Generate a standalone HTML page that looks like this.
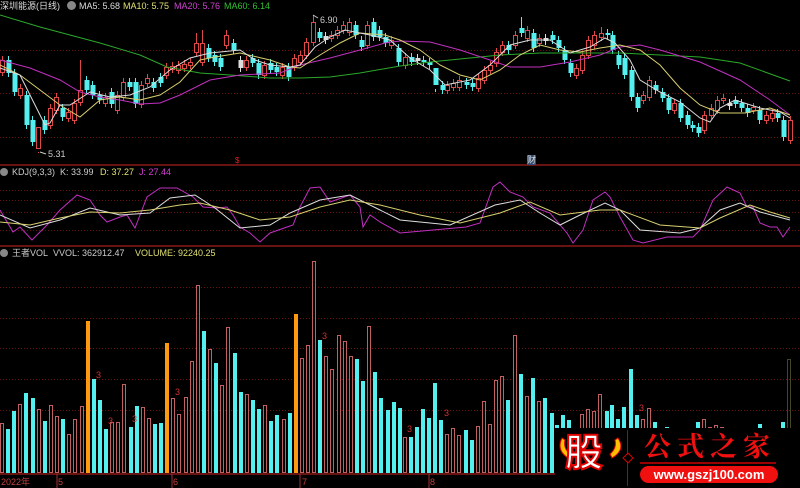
<!DOCTYPE html>
<html><head><meta charset="utf-8"><style>
html,body{margin:0;padding:0;background:#000;width:800px;height:488px;overflow:hidden;font-family:"Liberation Sans","Noto Sans CJK SC",sans-serif}
.t{position:absolute;font-size:9px;white-space:nowrap;line-height:10px}
</style></head><body>
<svg id="s" width="800" height="488" style="position:absolute;left:0;top:0">
<g stroke="#6a1010" stroke-dasharray="1,2" stroke-width="1">
<line x1="0" y1="50.5" x2="800" y2="50.5"/><line x1="0" y1="93.5" x2="800" y2="93.5"/><line x1="0" y1="137.5" x2="800" y2="137.5"/>
<line x1="0" y1="190.5" x2="800" y2="190.5"/><line x1="0" y1="200.5" x2="800" y2="200.5"/><line x1="0" y1="212.5" x2="800" y2="212.5"/><line x1="0" y1="230.5" x2="800" y2="230.5"/>
<line x1="0" y1="287.5" x2="800" y2="287.5"/><line x1="0" y1="318.5" x2="800" y2="318.5"/><line x1="0" y1="348.5" x2="800" y2="348.5"/><line x1="0" y1="379.5" x2="800" y2="379.5"/><line x1="0" y1="410.5" x2="800" y2="410.5"/>
</g>
<g stroke="#8a1818" stroke-width="1.5"><line x1="0" y1="165" x2="800" y2="165"/><line x1="0" y1="246" x2="800" y2="246"/><line x1="0" y1="474" x2="800" y2="474"/></g>
<g id="cd"></g><g id="ln" fill="none" stroke-width="1"></g><g id="vb"></g>
</svg>
<div class="t" style="left:0;top:1px;color:#ddd">深圳能源(日线)</div>
<div class="t" style="left:67px;top:1px;width:9px;height:9px;border-radius:50%;background:#888"></div>
<div class="t" style="left:79px;top:1px;color:#ddd">MA5: 5.68</div>
<div class="t" style="left:123px;top:1px;color:#e0e070">MA10: 5.75</div>
<div class="t" style="left:174px;top:1px;color:#d040d0">MA20: 5.76</div>
<div class="t" style="left:224px;top:1px;color:#30c030">MA60: 6.14</div>
<div class="t" style="left:320px;top:15px;color:#ccc">6.90</div>
<div class="t" style="left:48px;top:149px;color:#ccc">5.31</div>
<div class="t" style="left:235px;top:156px;color:#e02020;font-size:8px">$</div>
<div class="t" style="left:527px;top:155px;color:#ddd;background:#334a70;font-size:9px">财</div>
<div class="t" style="left:0;top:168px;width:8px;height:8px;border-radius:50%;background:#888"></div>
<div class="t" style="left:12px;top:167px;color:#ccc">KDJ(9,3,3)&nbsp; K: 33.99</div>
<div class="t" style="left:100px;top:167px;color:#e0e070">D: 37.27</div>
<div class="t" style="left:139px;top:167px;color:#d040d0">J: 27.44</div>
<div class="t" style="left:0;top:249px;width:8px;height:8px;border-radius:50%;background:#888"></div>
<div class="t" style="left:12px;top:248px;color:#ccc">王者VOL&nbsp; VVOL: 362912.47</div>
<div class="t" style="left:135px;top:248px;color:#e0e070">VOLUME: 92240.25</div>
<div class="t" style="left:1px;top:477px;color:#c04040">2022年</div>
<div class="t" style="left:58px;top:477px;color:#c04040">5</div>
<div class="t" style="left:173px;top:477px;color:#c04040">6</div>
<div class="t" style="left:302px;top:477px;color:#c04040">7</div>
<div class="t" style="left:430px;top:477px;color:#c04040">8</div>
<div style="position:absolute;left:555px;top:428px;width:245px;height:60px;background:#000"></div>
<svg width="70" height="30" style="position:absolute;left:556px;top:436px"><path d="M6 2 Q0 14 12 22 L14 18 Q7 12 9 4 Z" fill="#ffc000" stroke="#e00000" stroke-width="1"/><path d="M62 2 Q70 14 56 22 L54 18 Q61 12 59 4 Z" fill="#ffc000" stroke="#e00000" stroke-width="1"/></svg>
<div class="t" style="left:565px;top:428px;font-size:38px;line-height:44px;font-weight:bold;color:#fff;-webkit-text-stroke:2px #e00000;font-family:'Noto Sans CJK SC',sans-serif">股</div>
<div style="position:absolute;left:627px;top:430px;width:1px;height:56px;background:#b00"></div>
<div style="position:absolute;left:624px;top:454px;width:6px;height:6px;border:1px solid #d00;transform:rotate(45deg);background:#000"></div>
<div class="t" style="left:644px;top:429px;font-size:27px;line-height:32px;font-weight:bold;color:#f01010;letter-spacing:6px;font-family:'Noto Serif CJK SC',serif">公式之家</div>
<div style="position:absolute;left:640px;top:462px;width:136px;height:2px;background:#900"></div>
<div style="position:absolute;left:640px;top:466px;width:138px;height:17px;border-radius:9px;background:#f01010;color:#fff;font-size:13px;font-weight:bold;text-align:center;line-height:17px">www.gszj100.com</div>
<script>
var NS="http://www.w3.org/2000/svg";
function el(p,n,a){var e=document.createElementNS(NS,n);for(var k in a)e.setAttribute(k,a[k]);document.getElementById(p).appendChild(e);return e}
var cols=["#e04848","#54f0f0","#ddd"];
var C=[[2,60,72,0],[8,60,73,1],[14,73,92,1],[20,88,95,0],[26,95,125,1],[32,120,142,1],[38,127,148,0,153],[44,120,130,1],[50,108,125,0],[56,97,110,0],[62,108,117,1],[68,112,118,0],[74,103,120,0],[80,90,102,0,60],[86,80,90,1],[92,85,95,1],[99,95,100,1],[105,97,103,0],[111,92,104,1],[117,95,110,0],[123,82,97,0],[129,82,87,1],[135,82,104,1],[141,85,104,0],[147,78,83,0],[153,82,88,1],[160,77,83,1],[166,67,75,0],[172,66,69,0],[178,65,70,0],[184,64,68,0],[190,62,65,0],[196,43,52,0,33],[202,43,62,0,30],[208,48,58,1],[214,55,62,1],[220,58,67,1],[226,35,45,0,30],[233,43,50,1],[240,60,68,2],[246,60,67,0],[252,58,63,1],[258,63,75,1],[264,65,75,0],[270,63,70,1],[276,67,72,1],[282,67,75,0],[288,67,77,1],[294,58,67,0],[300,55,62,0],[306,42,55,0],[313,22,42,0,15],[319,32,38,1],[325,36,40,2],[331,35,38,0],[337,30,35,0],[343,25,30,0],[349,22,32,0],[355,25,35,1],[361,40,47,1],[367,25,45,0],[373,22,37,1],[379,30,37,1],[385,37,43,1],[391,40,45,0],[398,48,62,1],
[405,57,65,0],[411,57,62,1],[417,58,61,2],[423,60,62,1],[429,62,65,1],[435,68,85,1,92],[442,85,90,1],[447,85,90,0],[453,83,87,0],[459,80,87,0],[466,82,85,1],[472,83,87,1],[478,78,88,0],[484,70,80,0],[490,65,70,0],[496,52,63,0],[502,45,52,0],[508,45,50,1],[515,35,45,0],[521,28,33,1,17],[527,30,38,0],[533,33,48,1],[539,38,43,0],[545,38,41,2],[552,35,40,1],[558,40,48,1],[564,50,60,1],[570,63,73,1],[576,68,75,0],[582,55,70,0],[588,40,55,0],[594,35,45,0],[601,33,37,0,27],[607,33,35,1],[612,35,50,1],[618,55,65,1],[624,58,75,1],[631,70,97,1],[637,97,108,1],[643,95,100,0],[649,80,97,0],[655,85,90,1],[662,92,98,1],[668,98,110,1],[674,103,110,0],[680,103,118,1],[687,115,125,1],[692,125,128,1],[698,127,133,1],[704,115,130,0],[711,108,115,0],[717,100,110,0],[723,98,100,0],[729,103,106,2],[735,100,104,1],[741,103,108,1],[747,108,113,1],[753,107,110,0],[759,110,120,1],[766,115,120,0],[772,113,118,0],[777,113,118,1],[783,120,137,1],[790,120,140,0]];
C.forEach(function(c){var col=cols[c[3]];var hi=c[4]||c[1]-4;var lo=c[2]+4;
el("cd","line",{x1:c[0]+.5,x2:c[0]+.5,y1:hi,y2:lo,stroke:col});
if(c[3]==0)el("cd","rect",{x:c[0]-1.5,y:c[1]+.5,width:4,height:c[2]-c[1],fill:"#000",stroke:col});
else el("cd","rect",{x:c[0]-1.5,y:c[1],width:5,height:Math.max(1,c[2]-c[1]),fill:col});});
function pl(pts,col){el("ln","polyline",{points:pts,stroke:col});}
pl("0,15 40,27 100,43 140,55 167,67 200,73 230,75 270,78 300,78 330,77 360,73 400,66 430,62 470,58 500,55 540,53 580,53 620,53 660,55 700,57 740,63 790,81","#2aa82a");
pl("0,60 30,68 60,80 80,92 100,97 120,100 140,104 160,103 180,95 210,80 240,75 280,73 300,65 330,58 360,50 385,43 400,41 430,42 460,50 490,60 510,67 540,67 570,62 600,55 620,47 640,45 660,50 700,62 740,80 770,100 790,115","#c030c0");
pl("0,65 20,75 40,90 60,105 80,117 100,100 120,97 140,100 160,95 180,82 200,60 215,57 240,53 270,60 290,67 300,68 320,55 340,43 360,33 385,35 400,40 420,50 440,65 460,75 480,80 500,70 520,55 540,45 560,50 580,52 600,48 620,45 640,50 660,65 680,88 700,105 720,113 745,113 770,108 790,115","#d8d070");
pl("0,68 20,75 35,105 45,125 50,123 60,105 70,105 90,92 110,97 130,95 150,87 170,70 190,58 210,53 240,50 255,60 270,65 290,67 300,65 315,47 330,37 345,30 370,35 390,40 410,58 430,70 445,85 470,80 490,65 510,45 530,40 550,40 570,53 590,47 605,38 615,43 630,60 640,80 660,92 680,102 700,118 710,122 720,108 735,100 760,108 780,112 790,118","#ddd");
pl("40,152 46,154","#ccc");pl("313,15 318,18","#ccc");
pl("0,210 13,232 20,227 32,240 47,225 60,210 77,195 90,200 100,215 107,222 120,217 127,215 135,228 147,197 160,188 177,188 193,197 203,207 217,208 227,207 233,215 240,227 250,233 260,242 270,233 287,227 293,225 300,207 310,188 320,187 330,202 350,195 360,207 363,227 370,215 380,222 400,233 466,227 480,223 493,187 500,182 510,192 523,197 533,207 550,213 567,233 573,243 583,230 593,200 605,192 610,197 620,217 633,240 643,243 667,237 693,237 700,230 713,200 727,187 740,193 747,207 753,207 760,223 770,227 777,227 783,237 790,227","#c030c0");
pl("0,215 30,228 60,220 90,208 120,215 150,213 170,198 195,195 215,208 240,228 270,225 290,213 320,200 350,195 380,210 400,220 450,225 495,205 520,200 540,213 560,225 580,215 605,203 620,210 640,230 680,233 700,228 720,210 740,203 760,212 790,220","#ddd");
pl("0,222 30,225 60,218 90,212 120,213 150,210 180,205 200,203 230,210 260,220 290,217 320,207 350,200 380,205 420,215 460,223 500,213 530,202 560,215 600,210 620,210 660,225 700,228 720,218 750,205 770,212 790,218","#d8d070");
var V=[[423,0],[429,1],[411,1],[404,0],[393,1],[398,1],[409,0],[421,1],[405,0],[416,0],[419,1],[434,0],[419,0],[406,0],[321,2],[379,1],[400,1],[429,1],[422,0],[422,0],[384,0],[427,1],[406,1],[407,0],[418,0],[424,1],[423,1],[343,2],[398,0],[414,0],[397,0],[361,0],[285,0],[331,1],[349,0],[363,1],[385,0],[327,0],[353,1],[392,1],[394,0],[400,1],[409,1],[405,0],[421,1],[415,1],[419,0],[413,1],[314,2],[358,0],[345,0],[261,0],[340,1],[356,0],[369,0],[335,0],[341,0],[356,0],[359,1],[381,1],[326,0],[372,1],[398,1],[410,1],[402,1],[408,1]];
var V2=[[405,437,0],[411,437,1],[417,427,1],[423,409,1],[429,418,1],[435,383,1],[441,420,1],[447,434,0],[453,428,0],[459,435,0],[466,430,1],[472,440,1],[478,426,0],[484,401,0],[490,424,0],[496,380,0],[502,376,0],[508,400,1],[515,335,0],[521,374,1],[527,396,0],[533,378,1],[539,401,0],[545,398,1],[552,413,1],[557,425,1],[563,415,1],[569,420,1],[582,414,0],[588,409,0],[594,411,0],[600,394,0],[607,411,1],[612,405,1],[618,419,1],[624,407,1],[631,369,1],[637,415,1],[643,419,0],[649,408,0],[655,422,1],[667,427,1],[698,422,1],[704,419,0],[710,427,0],[716,425,0],[722,427,0],[760,424,1],[783,422,1]];
function vb(x,t,c){if(c==0)el("vb","rect",{x:x+.5,y:t+.5,width:3,height:472-t,fill:"#000",stroke:"#c06060"});else el("vb","rect",{x:x,y:t,width:4,height:473-t,fill:c==1?"#54f0f0":"#ff9a10"});}
V.forEach(function(v,i){vb(Math.round(i*6.12),v[0],v[1]);});
V2.forEach(function(v){vb(v[0]-2,v[1],v[2]);});
el("vb","rect",{x:787.5,y:359.5,width:3,height:113,fill:"none",stroke:"#8a8a50","stroke-dasharray":"1,1"});
[[96,378],[108,424],[132,422],[175,395],[322,339],[407,432],[444,416],[639,411]].forEach(function(p){var t=el("vb","text",{x:p[0],y:p[1],fill:"#d03030","font-size":"9","font-family":"Liberation Sans"});t.textContent="3";});
[[57,474],[172,474],[300,474],[429,474]].forEach(function(p){el("vb","line",{x1:p[0],x2:p[0],y1:p[1],y2:488,stroke:"#a03030"});});
</script>
</body></html>
